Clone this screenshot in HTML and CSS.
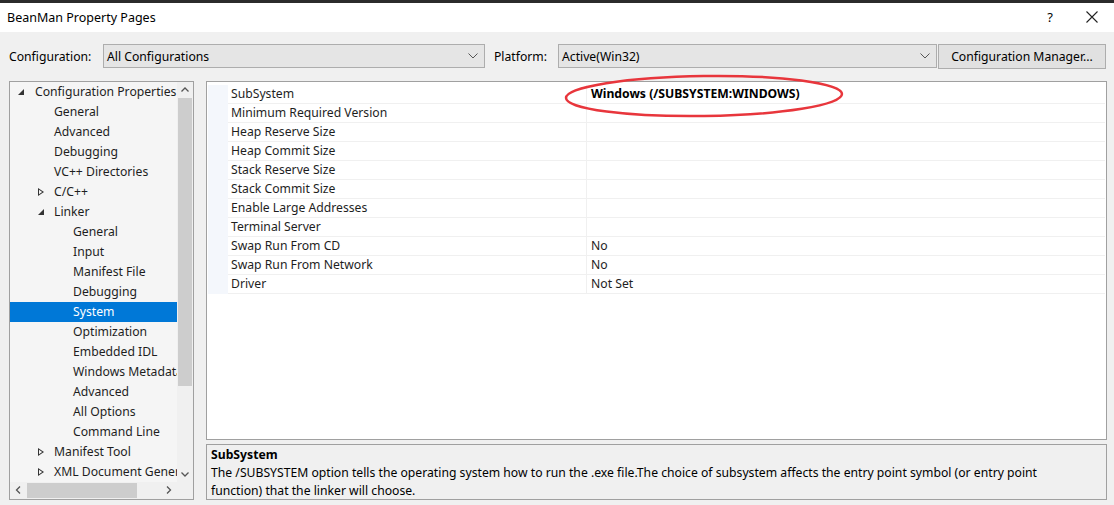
FILE: index.html
```html
<!DOCTYPE html>
<html>
<head>
<meta charset="utf-8">
<link rel="stylesheet" href="styles.css">
</head>
<body>
<div class="window">
  <div class="topline"></div>
  <div class="titlebar">
    <span class="title">BeanMan Property Pages</span>
    <span class="tb-btns"><span class="help">?</span><svg class="close" width="12" height="12" viewBox="0 0 12 12"><path d="M0.5 0.5L11.5 11.5M11.5 0.5L0.5 11.5" stroke="#222" stroke-width="1.1" fill="none"/></svg></span>
  </div>
  <div class="configrow">
    <span class="lbl">Configuration:</span>
    <div class="combo combo-conf"><span>All Configurations</span><svg width="10" height="6" viewBox="0 0 10 6"><path d="M0.5 0.5L5 5L9.5 0.5" stroke="#555" fill="none"/></svg></div>
    <span class="lbl lbl-plat">Platform:</span>
    <div class="combo combo-plat"><span>Active(Win32)</span><svg width="10" height="6" viewBox="0 0 10 6"><path d="M0.5 0.5L5 5L9.5 0.5" stroke="#555" fill="none"/></svg></div>
    <div class="btn">Configuration Manager...</div>
  </div>
  <div class="main">
    <div class="tree">
      <div class="tree-body">
        <div class="tree-items">
          <div class="ti l0"><span class="tw open"></span>Configuration Properties</div>
          <div class="ti l1">General</div>
          <div class="ti l1">Advanced</div>
          <div class="ti l1">Debugging</div>
          <div class="ti l1">VC++ Directories</div>
          <div class="ti l1"><span class="tw closed"></span>C/C++</div>
          <div class="ti l1"><span class="tw open"></span>Linker</div>
          <div class="ti l2">General</div>
          <div class="ti l2">Input</div>
          <div class="ti l2">Manifest File</div>
          <div class="ti l2">Debugging</div>
          <div class="ti l2 sel">System</div>
          <div class="ti l2">Optimization</div>
          <div class="ti l2">Embedded IDL</div>
          <div class="ti l2">Windows Metadata</div>
          <div class="ti l2">Advanced</div>
          <div class="ti l2">All Options</div>
          <div class="ti l2">Command Line</div>
          <div class="ti l1"><span class="tw closed"></span>Manifest Tool</div>
          <div class="ti l1"><span class="tw closed"></span>XML Document Generator</div>
        </div>
        <div class="vscroll">
          <svg class="arr" width="16" height="16" viewBox="0 0 16 16"><path d="M4.5 9.5L8 6L11.5 9.5" stroke="#555" stroke-width="1.3" fill="none"/></svg>
          <div class="vtrack"><div class="vthumb"></div></div>
          <svg class="arr" width="16" height="16" viewBox="0 0 16 16"><path d="M4.5 6.5L8 10L11.5 6.5" stroke="#555" stroke-width="1.3" fill="none"/></svg>
        </div>
      </div>
      <div class="hscroll">
        <svg class="arr" width="17" height="16" viewBox="0 0 17 16"><path d="M10 4.5L6.5 8L10 11.5" stroke="#555" stroke-width="1.3" fill="none"/></svg>
        <div class="htrack"><div class="hthumb"></div></div>
        <svg class="arr" width="17" height="16" viewBox="0 0 17 16"><path d="M7 4.5L10.5 8L7 11.5" stroke="#555" stroke-width="1.3" fill="none"/></svg>
        <div class="corner"></div>
      </div>
    </div>
    <div class="right">
      <div class="grid">
        <div class="rows">
          <div class="row"><span class="gutter"></span><span class="name">SubSystem</span><span class="val bold">Windows (/SUBSYSTEM:WINDOWS)</span></div>
          <div class="row"><span class="gutter"></span><span class="name">Minimum Required Version</span><span class="val"></span></div>
          <div class="row"><span class="gutter"></span><span class="name">Heap Reserve Size</span><span class="val"></span></div>
          <div class="row"><span class="gutter"></span><span class="name">Heap Commit Size</span><span class="val"></span></div>
          <div class="row"><span class="gutter"></span><span class="name">Stack Reserve Size</span><span class="val"></span></div>
          <div class="row"><span class="gutter"></span><span class="name">Stack Commit Size</span><span class="val"></span></div>
          <div class="row"><span class="gutter"></span><span class="name">Enable Large Addresses</span><span class="val"></span></div>
          <div class="row"><span class="gutter"></span><span class="name">Terminal Server</span><span class="val"></span></div>
          <div class="row"><span class="gutter"></span><span class="name">Swap Run From CD</span><span class="val">No</span></div>
          <div class="row"><span class="gutter"></span><span class="name">Swap Run From Network</span><span class="val">No</span></div>
          <div class="row"><span class="gutter"></span><span class="name">Driver</span><span class="val">Not Set</span></div>
        </div>
        <svg class="ellipse" width="284" height="46" viewBox="0 0 284 46"><ellipse cx="142" cy="23" rx="138" ry="20" transform="rotate(-0.8 142 23)" stroke="#e8363c" stroke-width="2.5" fill="none"/></svg>
      </div>
      <div class="desc">
        <div class="desc-title">SubSystem</div>
        <div class="desc-text">The /SUBSYSTEM option tells the operating system how to run the .exe file.The choice of subsystem affects the entry point symbol (or entry point function) that the linker will choose.</div>
      </div>
    </div>
  </div>
</div>
</body>
</html>
```

FILE: styles.css
```css
* { box-sizing: border-box; }
html, body { margin: 0; padding: 0; }
body {
  width: 1114px;
  height: 505px;
  overflow: hidden;
  background: #f0f0f0;
  font-family: "Noto Sans", "Open Sans", sans-serif;
  font-size: 12.2px;
  color: #000;
}
.window { width: 1114px; height: 505px; display: flex; flex-direction: column; }
.topline { height: 3px; background: #2b2b2b; }
.titlebar {
  height: 29px;
  background: #fff;
  display: flex;
  align-items: center;
  justify-content: space-between;
  padding: 0 16px 0 7px;
  font-size: 12.5px;
}
.tb-btns { display: flex; align-items: center; gap: 33px; }
.help { font-size: 13px; }
.configrow {
  height: 50px;
  display: flex;
  align-items: center;
  padding: 0 0 0 9px;
}
.lbl { width: 94px; }
.lbl-plat { width: 64px; margin-left: 9px; }
.combo {
  height: 24px;
  border: 1px solid #adadad;
  background: #e5e5e5;
  display: flex;
  align-items: center;
  justify-content: space-between;
  padding: 0 6px 0 3px;
}
.combo-conf { width: 382px; }
.combo-plat { width: 379px; }
.btn {
  width: 168px;
  height: 25px;
  border: 1px solid #adadad;
  background: #e1e1e1;
  display: flex;
  align-items: center;
  justify-content: center;
  margin-left: 1px;
}
.main {
  flex: 1;
  display: flex;
  padding: 0 7px 5px 9px;
  gap: 12px;
}
.tree {
  width: 185px;
  border: 1px solid #a0a0a0;
  background: #f5f5f5;
  display: flex;
  flex-direction: column;
}
.tree-body { flex: 1; display: flex; min-height: 0; }
.tree-items { flex: 1; overflow: hidden; min-width: 0; }
.ti {
  height: 20px;
  line-height: 20px;
  white-space: nowrap;
  overflow: hidden;
  position: relative;
  color: #1e1e1e;
}
.l0 { padding-left: 25px; }
.l1 { padding-left: 44px; }
.l2 { padding-left: 63px; }
.sel { background: #0078d7; color: #fff; }
.tw { position: absolute; top: 7px; width: 0; height: 0; }
.l0 .tw { left: 8px; }
.l1 .tw { left: 28px; }
.tw.open {
  border-left: 6px solid transparent;
  border-bottom: 6px solid #333;
  top: 7px;
}
.tw.closed {
  width: 6px; height: 8px; top: 6px;
  background: #333;
  clip-path: polygon(0 0, 100% 50%, 0 100%, 0 0, 1px 1.8px, 1px 6.2px, 4.2px 4px, 1px 1.8px);
}
.vscroll {
  width: 16px;
  display: flex;
  flex-direction: column;
  background: #f0f0f0;
}
.arr { display: block; flex: none; }
.vtrack { flex: 1; }
.vthumb { margin: 0 1px; height: 288px; background: #cdcdcd; }
.hscroll {
  height: 17px;
  display: flex;
  background: #f0f0f0;
}
.htrack { flex: 1; display: flex; align-items: center; }
.hthumb { width: 110px; height: 15px; background: #cdcdcd; }
.corner { width: 16px; background: #f0f0f0; }
.right { flex: 1; display: flex; flex-direction: column; gap: 4px; }
.grid {
  flex: 1;
  border: 1px solid #a0a0a0;
  background: #fff;
  position: relative;
  padding: 3px 1px 1px;
}
.row {
  display: flex;
  height: 19px;
  line-height: 18px;
}
.gutter { width: 20px; background: #f4f7fc; flex: none; }
.name {
  width: 359px;
  padding-left: 3px;
  border-bottom: 1px solid #f0f0f0;
  border-right: 1px solid #f0f0f0;
  flex: none;
  color: #1e1e1e;
}
.val {
  flex: 1;
  padding-left: 4px;
  border-bottom: 1px solid #f0f0f0;
  color: #1e1e1e;
}
.bold { font-weight: bold; color: #000; }
.ellipse { position: absolute; left: 355px; top: -9px; }
.desc {
  height: 56px;
  border: 1px solid #a0a0a0;
  background: #f0f0f0;
  padding: 1px 4px;
  line-height: 18px;
}
.desc-text { width: 850px; }
.desc-title { font-weight: bold; }
```
